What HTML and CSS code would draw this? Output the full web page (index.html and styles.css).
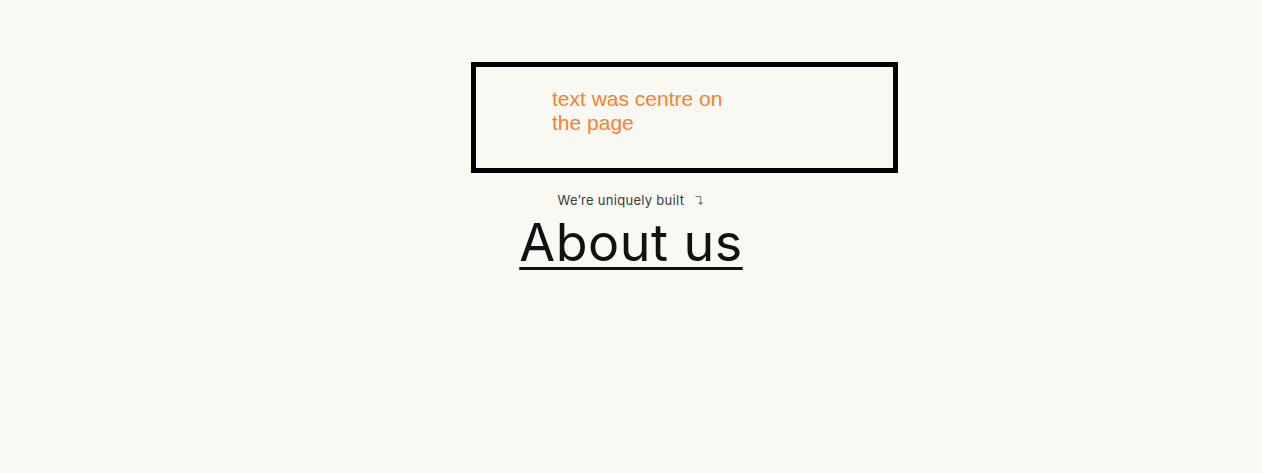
FILE: index.html
```html
<!DOCTYPE html>
<html lang="en">
<head>
<meta charset="utf-8">
<title>About us</title>
<link rel="stylesheet" href="styles.css">
</head>
<body>
<main class="page">
  <div class="note">
    <p class="note-text">text was centre on the page</p>
  </div>
  <section class="hero">
    <p class="eyebrow">We’re uniquely built <span class="arrow">↴</span></p>
    <h1 class="title"><a href="#" class="title-link">About us</a></h1>
  </section>
</main>
</body>
</html>
```
FILE: styles.css
```css
html, body {
  margin: 0;
  padding: 0;
  background: #f9f8f3;
}
.page {
  height: 473px;
  padding-top: 62px;
  box-sizing: border-box;
  display: flex;
  flex-direction: column;
}
.note {
  margin-left: 471px;
  width: 427px;
  height: 111px;
  box-sizing: border-box;
  border: 5px solid #000;
  padding: 20px 0 0 76px;
}
.note-text {
  margin: 0;
  width: 190px;
  font-family: "Liberation Sans", Arial, sans-serif;
  font-size: 21px;
  line-height: 24px;
  color: #f5822f;
}
.hero {
  display: flex;
  flex-direction: column;
  align-items: center;
  padding-top: 18px;
}
.eyebrow {
  margin: 0;
  font-family: Inter, sans-serif;
  font-size: 13px;
  line-height: 18px;
  letter-spacing: 0.3px;
  color: #3a3a3a;
}
.arrow {
  margin-left: 6px;
  font-size: 12px;
  color: #777;
}
.title {
  margin: 5px 0 0;
  font-family: Inter, sans-serif;
  font-weight: 400;
  font-size: 52px;
  line-height: 56px;
  letter-spacing: 0.5px;
}
.title-link {
  color: #111;
  text-decoration: underline;
  text-decoration-thickness: 3px;
  text-underline-offset: 6px;
}
```
